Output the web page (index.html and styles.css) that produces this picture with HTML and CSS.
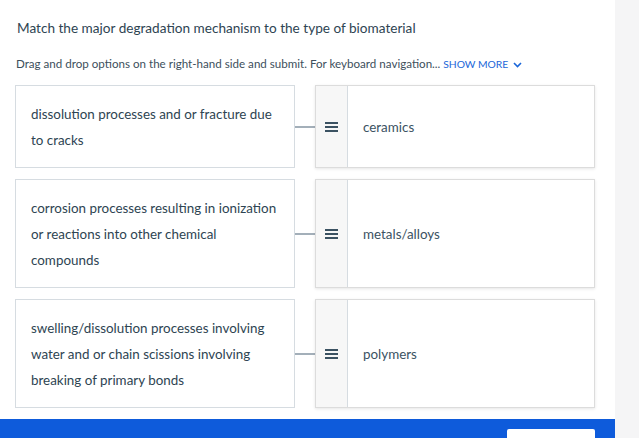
FILE: index.html
```html
<!DOCTYPE html>
<html>
<head>
<meta charset="utf-8">
<link rel="stylesheet" href="styles.css">
</head>
<body>
<div class="page">
  <div class="main">
    <h1 class="title">Match the major degradation mechanism to the type of biomaterial</h1>
    <p class="instr">Drag and drop options on the right-hand side and submit. For keyboard navigation... <span class="more">SHOW MORE <svg class="chev" width="9" height="6" viewBox="0 0 9 6"><path d="M1 1 L4.5 4.5 L8 1" fill="none" stroke="#1a66d9" stroke-width="1.6"/></svg></span></p>
    <div class="rows">
      <div class="row">
        <div class="prompt">dissolution processes and or fracture due to cracks</div>
        <div class="link"></div>
        <div class="answer"><div class="handle"><span class="burger"><i></i><i></i><i></i></span></div><div class="atext">ceramics</div></div>
      </div>
      <div class="row">
        <div class="prompt">corrosion processes resulting in ionization or reactions into other chemical compounds</div>
        <div class="link"></div>
        <div class="answer"><div class="handle"><span class="burger"><i></i><i></i><i></i></span></div><div class="atext">metals/alloys</div></div>
      </div>
      <div class="row">
        <div class="prompt">swelling/dissolution processes involving water and or chain scissions involving breaking of primary bonds</div>
        <div class="link"></div>
        <div class="answer"><div class="handle"><span class="burger"><i></i><i></i><i></i></span></div><div class="atext">polymers</div></div>
      </div>
    </div>
    <div class="footer"><div class="btn"></div></div>
  </div>
  <div class="side"></div>
</div>
</body>
</html>
```
FILE: styles.css
```css
html, body { margin: 0; padding: 0; }
body {
  font-family: "Lato", "Open Sans", sans-serif;
  color: #2e4452;
  background: #f5f5f6;
  width: 639px;
  height: 438px;
  overflow: hidden;
}
.page { display: flex; height: 438px; }
.main {
  width: 615px;
  background: #fff;
  display: flex;
  flex-direction: column;
  box-shadow: 1px 0 2px rgba(0,0,0,0.06);
}
.side { flex: 1; background: #f5f5f6; }
.title {
  margin: 18px 0 0 17px;
  font-size: 13.6px;
  font-weight: 400;
  line-height: 20px;
}
.instr {
  margin: 18px 0 0 16px;
  font-size: 11.6px;
  line-height: 16px;
  color: #3d4f5c;
}
.more { color: #1a66d9; margin-left: 0; font-size: 10.3px; }
.chev { margin-left: 2px; vertical-align: 0; }
.rows {
  margin: 13px 0 0 15px;
  display: flex;
  flex-direction: column;
  gap: 11px;
}
.row { display: flex; align-items: stretch; }
.prompt {
  width: 247px;
  border: 1px solid #d6dce1;
  padding: 15px 16px 14px 15px;
  font-size: 13.4px;
  line-height: 26px;
  color: #2e4452;
}
.link {
  width: 20px;
  align-self: center;
  height: 2px;
  background: #a3afb9;
}
.answer {
  width: 278px;
  border: 1px solid #dcdcdc;
  box-shadow: 0 1px 3px rgba(0,0,0,0.10);
  display: flex;
}
.handle {
  width: 31px;
  background: #f7f7f7;
  border-right: 1px solid #d6dce1;
  display: flex;
  align-items: center;
  justify-content: center;
}
.burger { display: flex; flex-direction: column; gap: 2px; width: 13px; }
.burger i { display: block; height: 2px; background: #3b5262; }
.atext {
  display: flex;
  align-items: center;
  padding-left: 15px;
  font-size: 13.4px;
  color: #3b5262;
}
.footer {
  margin-top: auto;
  height: 19px;
  background: #0e5bdb;
  position: relative;
}
.btn {
  position: absolute;
  left: 507px;
  top: 10px;
  width: 88px;
  height: 20px;
  background: #fff;
  border-radius: 2px;
}
```
